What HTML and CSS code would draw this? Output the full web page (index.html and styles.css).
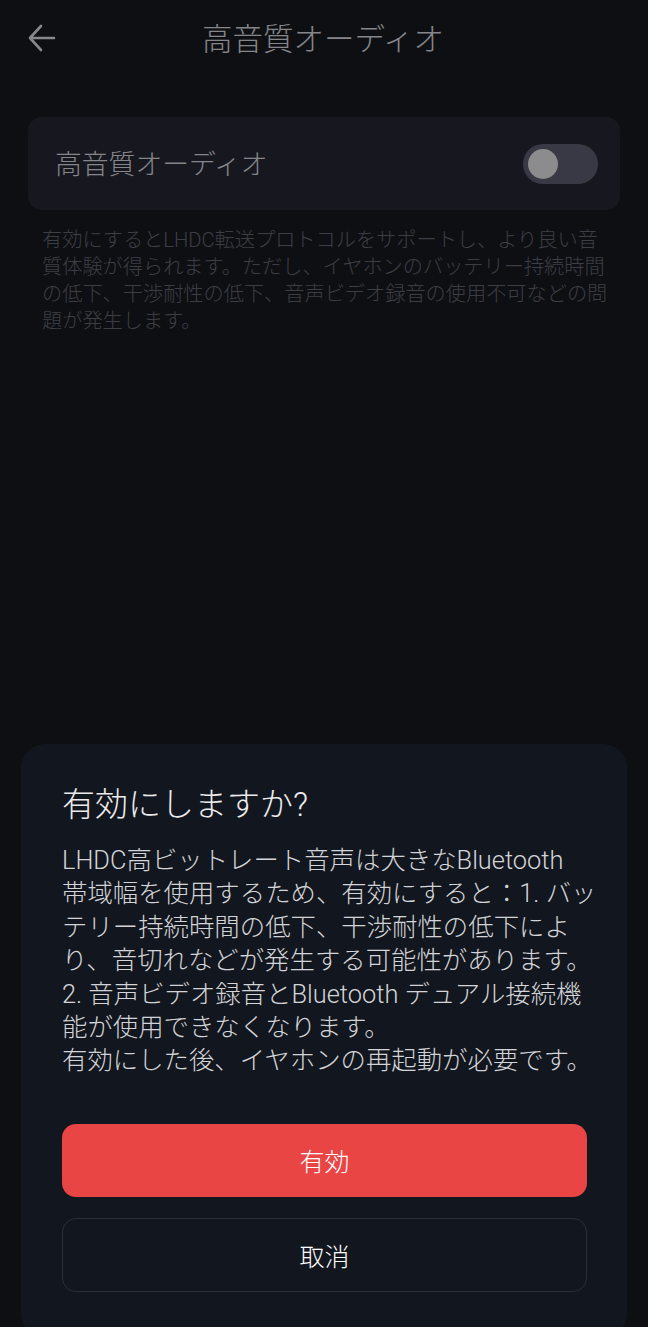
FILE: index.html
```html
<!DOCTYPE html>
<html lang="ja">
<head>
<meta charset="utf-8">
<link rel="stylesheet" href="styles.css">
</head>
<body>
<div class="page">
  <header class="topbar">
    <svg class="back" width="32" height="32" viewBox="0 0 32 32">
      <path d="M28 16H4M15 4L4 16l11 12" fill="none" stroke="#86868b" stroke-width="2.6" stroke-linecap="round" stroke-linejoin="round"/>
    </svg>
    <h1 class="title">高音質オーディオ</h1>
  </header>
  <section class="card">
    <span class="card-label">高音質オーディオ</span>
    <span class="toggle"><span class="knob"></span></span>
  </section>
  <p class="desc">有効にするとLHDC転送プロトコルをサポートし、より良い音<br>質体験が得られます。ただし、イヤホンのバッテリー持続時間<br>の低下、干渉耐性の低下、音声ビデオ録音の使用不可などの問<br>題が発生します。</p>
</div>
<div class="sheet">
  <h2 class="sheet-title">有効にしますか?</h2>
  <p class="sheet-body">LHDC高ビットレート音声は大きなBluetooth<br>帯域幅を使用するため、有効にすると：1. バッ<br>テリー持続時間の低下、干渉耐性の低下によ<br>り、音切れなどが発生する可能性があります。<br>2. 音声ビデオ録音とBluetooth デュアル接続機<br>能が使用できなくなります。<br>有効にした後、イヤホンの再起動が必要です。</p>
  <div class="actions">
    <button class="btn btn-primary">有効</button>
    <button class="btn btn-secondary">取消</button>
  </div>
</div>
</body>
</html>
```
FILE: styles.css
```css
* { box-sizing: border-box; }
html, body {
  margin: 0;
  padding: 0;
  background: #0e0f13;
  font-family: Roboto, "Noto Sans CJK JP", "Noto Sans", sans-serif;
}
body {
  width: 648px;
  height: 1327px;
  overflow: hidden;
  position: relative;
}
.page {
  padding: 0 28px;
}
.topbar {
  height: 74px;
  display: flex;
  align-items: center;
  justify-content: center;
  position: relative;
}
.back {
  position: absolute;
  left: -2px;
  top: 22px;
}
.title {
  margin: 0 0 0 -2px;
  font-size: 30.5px;
  font-weight: 300;
  color: #85858a;
}
.card {
  margin-top: 43px;
  height: 93px;
  background: #17181f;
  border-radius: 14px;
  display: flex;
  align-items: center;
  justify-content: space-between;
  padding: 0 22px 3px 27px;
}
.card-label {
  font-size: 26.8px;
  font-weight: 300;
  color: #85858a;
}
.toggle {
  margin-top: 3px;
  width: 75px;
  height: 40px;
  border-radius: 20px;
  background: #383944;
  display: flex;
  align-items: center;
  padding-left: 5px;
}
.knob {
  width: 30px;
  height: 30px;
  border-radius: 50%;
  background: #8c8c8f;
}
.desc {
  margin: 17px 0 0;
  padding: 0 0 0 14px;
  font-size: 20.2px;
  font-weight: 300;
  line-height: 27px;
  color: #3d3e45;
  white-space: nowrap;
}
.sheet {
  position: absolute;
  left: 21px;
  right: 21px;
  top: 744px;
  bottom: -10px;
  background: #12161e;
  border-radius: 24px;
  padding: 40px 20px 0 41px;
}
.sheet-title {
  margin: 0;
  font-size: 33px;
  line-height: 42px;
  font-weight: 300;
  color: #ebebec;
}
.sheet-body {
  margin: 18px 0 0;
  font-size: 25.4px;
  font-weight: 300;
  line-height: 33.4px;
  color: #d3d4d8;
  white-space: nowrap;
}
.actions {
  margin-top: 46px;
  margin-right: 20px;
  display: flex;
  flex-direction: column;
  gap: 21px;
}
.btn {
  height: 73px;
  border-radius: 14px;
  font-family: inherit;
  font-size: 25px;
  font-weight: 300;
  color: #ffffff;
  border: none;
}
.btn-primary {
  background: #e94545;
}
.btn-secondary {
  height: 74px;
  background: transparent;
  border: 1px solid #2b2f37;
}
```
